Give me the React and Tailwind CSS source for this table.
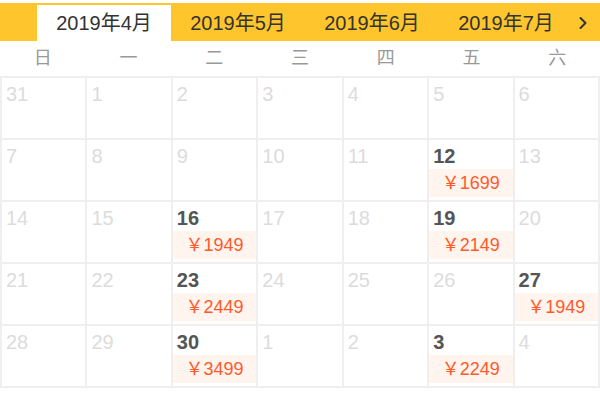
import { ChevronRight } from 'lucide-react'

const months = ['2019年4月', '2019年5月', '2019年6月', '2019年7月']
const weekdays = ['日', '一', '二', '三', '四', '五', '六']

// [day, price] — price null means no fare that day
const days = [
  [31], [1], [2], [3], [4], [5], [6],
  [7], [8], [9], [10], [11], [12, 1699], [13],
  [14], [15], [16, 1949], [17], [18], [19, 2149], [20],
  [21], [22], [23, 2449], [24], [25], [26], [27, 1949],
  [28], [29], [30, 3499], [1], [2], [3, 2249], [4],
]

function DayCell({ day, price }) {
  return (
    <div className="bg-white h-[60px] pt-[4px] flex flex-col">
      <div
        className={
          'pl-[4px] h-[24px] leading-[24px] text-[20px] ' +
          (price ? 'font-bold text-[#555]' : 'text-[#dcdcdc]')
        }
      >
        {day}
      </div>
      {price && (
        <div className="mt-[1px] h-[28px] leading-[28px] bg-[#fff4ee] text-center text-[18px] text-[#ff5a2a]">
          ￥{price}
        </div>
      )}
    </div>
  )
}

export default function App() {
  return (
    <div
      className="w-[600px] h-[397px] bg-white overflow-hidden"
      style={{ fontFamily: '"Liberation Sans", "Noto Sans CJK SC", sans-serif' }}
    >
      {/* month tabs */}
      <div className="mt-[3px] h-[38px] bg-[#fec52c] flex items-end pl-[37px]">
        {months.map((m, i) => (
          <div
            key={m}
            className={
              'w-[134px] h-[36px] flex items-center justify-center text-[20px] text-[#333] ' +
              (i === 0 ? 'bg-white' : '')
            }
          >
            {m}
          </div>
        ))}
        <div className="h-[36px] flex items-center text-[#333]">
          <ChevronRight size={20} strokeWidth={2.5} />
        </div>
      </div>

      {/* weekday header */}
      <div className="grid grid-cols-7 h-[35px] items-center">
        {weekdays.map(w => (
          <div key={w} className="text-center text-[18px] text-[#999]">{w}</div>
        ))}
      </div>

      {/* day grid */}
      <div className="grid grid-cols-7 gap-[2px] p-[2px] bg-[#efefef]">
        {days.map(([d, p], i) => (
          <DayCell key={i} day={d} price={p} />
        ))}
      </div>
    </div>
  )
}
